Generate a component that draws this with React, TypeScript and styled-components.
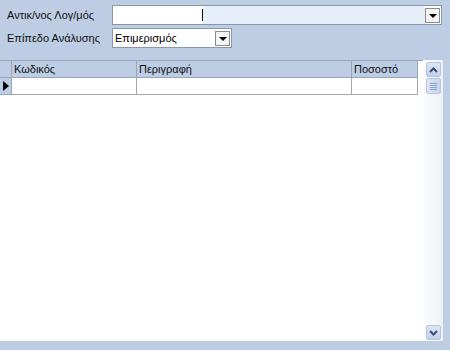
import styled, { createGlobalStyle } from 'styled-components';

const GlobalStyle = createGlobalStyle`
  html, body {
    margin: 0;
    padding: 0;
    background: #bdcde4;
  }
  body {
    font-family: "Liberation Sans", Arial, sans-serif;
    font-size: 11px;
    color: #111;
  }
`;

const columns = [
  { title: 'Κωδικός', width: 125 },
  { title: 'Περιγραφή', width: 215 },
  { title: 'Ποσοστό', width: 66 },
];

const App = () => {
  return (
    <Page>
      <GlobalStyle />
      <Form>
        <FieldRow $top={5}>
          <Label>Αντικ/νος Λογ/μός</Label>
          <Combo $width={330} $height={20}>
            <ComboText $split>
              <Caret />
            </ComboText>
            <DropButton>
              <Arrow />
            </DropButton>
          </Combo>
        </FieldRow>
        <FieldRow $top={3}>
          <Label>Επίπεδο Ανάλυσης</Label>
          <Combo $width={120} $height={20}>
            <ComboText>Επιμερισμός</ComboText>
            <DropButton>
              <Arrow />
            </DropButton>
          </Combo>
        </FieldRow>
      </Form>

      <Grid>
        <TableArea>
          <HeaderRow>
            <IndicatorCell />
            {columns.map((c) => (
              <HeaderCell key={c.title} $width={c.width}>
                {c.title}
              </HeaderCell>
            ))}
          </HeaderRow>
          <DataRow>
            <IndicatorCell>
              <RowPointer />
            </IndicatorCell>
            {columns.map((c) => (
              <DataCell key={c.title} $width={c.width} />
            ))}
          </DataRow>
        </TableArea>
        <ScrollBar>
          <ScrollButton>
            <svg width="9" height="6" viewBox="0 0 9 6">
              <path d="M1 5 L4.5 1.5 L8 5" fill="none" stroke="#3c4e74" strokeWidth="2" />
            </svg>
          </ScrollButton>
          <Thumb>
            <Grip />
            <Grip />
            <Grip />
            <Grip />
          </Thumb>
          <Track />
          <ScrollButton>
            <svg width="9" height="6" viewBox="0 0 9 6">
              <path d="M1 1 L4.5 4.5 L8 1" fill="none" stroke="#3c4e74" strokeWidth="2" />
            </svg>
          </ScrollButton>
        </ScrollBar>
      </Grid>
    </Page>
  );
};

export default App;

const Page = styled.div`
  width: 450px;
  height: 350px;
  background: #bdcde4;
  overflow: hidden;
  display: flex;
  flex-direction: column;
`;

const Form = styled.div`
  display: flex;
  flex-direction: column;
  padding-left: 7px;
`;

const FieldRow = styled.div<{ $top: number }>`
  display: flex;
  align-items: center;
  margin-top: ${(p) => p.$top}px;
`;

const Label = styled.div`
  width: 105px;
  font-size: 11px;
  color: #111;
  white-space: nowrap;
`;

const Combo = styled.div<{ $width: number; $height: number }>`
  width: ${(p) => p.$width}px;
  height: ${(p) => p.$height}px;
  box-sizing: border-box;
  border: 1px solid #8a97a8;
  background: #fff;
  display: flex;
  align-items: center;
  padding-right: 1px;
`;

const ComboText = styled.div<{ $split?: boolean }>`
  flex: 1;
  height: 100%;
  display: flex;
  align-items: center;
  padding-left: 2px;
  font-size: 11px;
  color: #000;
  position: relative;
  background: ${(p) =>
    p.$split ? 'linear-gradient(to right, #fff 0, #fff 90px, #e6eef9 90px)' : '#fff'};
`;

const Caret = styled.span`
  position: absolute;
  left: 89px;
  top: 3px;
  width: 1px;
  height: 12px;
  background: #000;
`;

const DropButton = styled.div`
  width: 15px;
  height: 15px;
  box-sizing: border-box;
  border: 1px solid #8c8c8c;
  background: #f4f4f4;
  display: flex;
  align-items: center;
  justify-content: center;
`;

const Arrow = styled.span`
  width: 0;
  height: 0;
  border-left: 4px solid transparent;
  border-right: 4px solid transparent;
  border-top: 4px solid #000;
  margin-top: 1px;
`;

const Grid = styled.div`
  margin-top: 12px;
  width: 443px;
  height: 281px;
  display: flex;
  background: #fff;
`;

const TableArea = styled.div`
  width: 423px;
  display: flex;
  flex-direction: column;
`;

const HeaderRow = styled.div`
  display: flex;
  height: 17px;
  box-sizing: content-box;
  border-top: 1px solid #9aa6b6;
`;

const DataRow = styled.div`
  display: flex;
  height: 17px;
`;

const IndicatorCell = styled.div`
  width: 12px;
  box-sizing: border-box;
  background: #bdcde4;
  border-right: 1px solid #9aa6b6;
  border-bottom: 1px solid #9aa6b6;
  display: flex;
  align-items: center;
  justify-content: center;
`;

const RowPointer = styled.span`
  width: 0;
  height: 0;
  border-top: 5px solid transparent;
  border-bottom: 5px solid transparent;
  border-left: 6px solid #000;
  margin-left: 1px;
`;

const HeaderCell = styled.div<{ $width: number }>`
  width: ${(p) => p.$width}px;
  box-sizing: border-box;
  background: #bdcde4;
  border-right: 1px solid #9aa6b6;
  border-bottom: 1px solid #9aa6b6;
  padding-left: 2px;
  font-size: 11px;
  line-height: 16px;
  color: #111;
  white-space: nowrap;
`;

const DataCell = styled.div<{ $width: number }>`
  width: ${(p) => p.$width}px;
  box-sizing: border-box;
  background: #fff;
  border-right: 1px solid #a3a8b0;
  border-bottom: 1px solid #a3a8b0;
`;

const ScrollBar = styled.div`
  width: 20px;
  display: flex;
  flex-direction: column;
  align-items: center;
  padding: 2px 0 1px;
  box-sizing: border-box;
  background: linear-gradient(to right, #fbfcfd, #eef1f4);
`;

const ScrollButton = styled.div`
  width: 15px;
  height: 15px;
  box-sizing: border-box;
  border: 1px solid #b5c5e2;
  border-radius: 2px;
  background: linear-gradient(to bottom, #dbe5f5, #c3d2ec);
  display: flex;
  align-items: center;
  justify-content: center;
`;

const Thumb = styled.div`
  width: 15px;
  height: 16px;
  margin-top: 1px;
  box-sizing: border-box;
  border: 1px solid #b5c5e2;
  border-radius: 2px;
  background: linear-gradient(to right, #dbe5f5, #c6d4ec);
  display: flex;
  flex-direction: column;
  align-items: center;
  justify-content: center;
  gap: 1px;
`;

const Grip = styled.span`
  width: 7px;
  height: 1px;
  background: #8ea3c8;
`;

const Track = styled.div`
  flex: 1;
`;
